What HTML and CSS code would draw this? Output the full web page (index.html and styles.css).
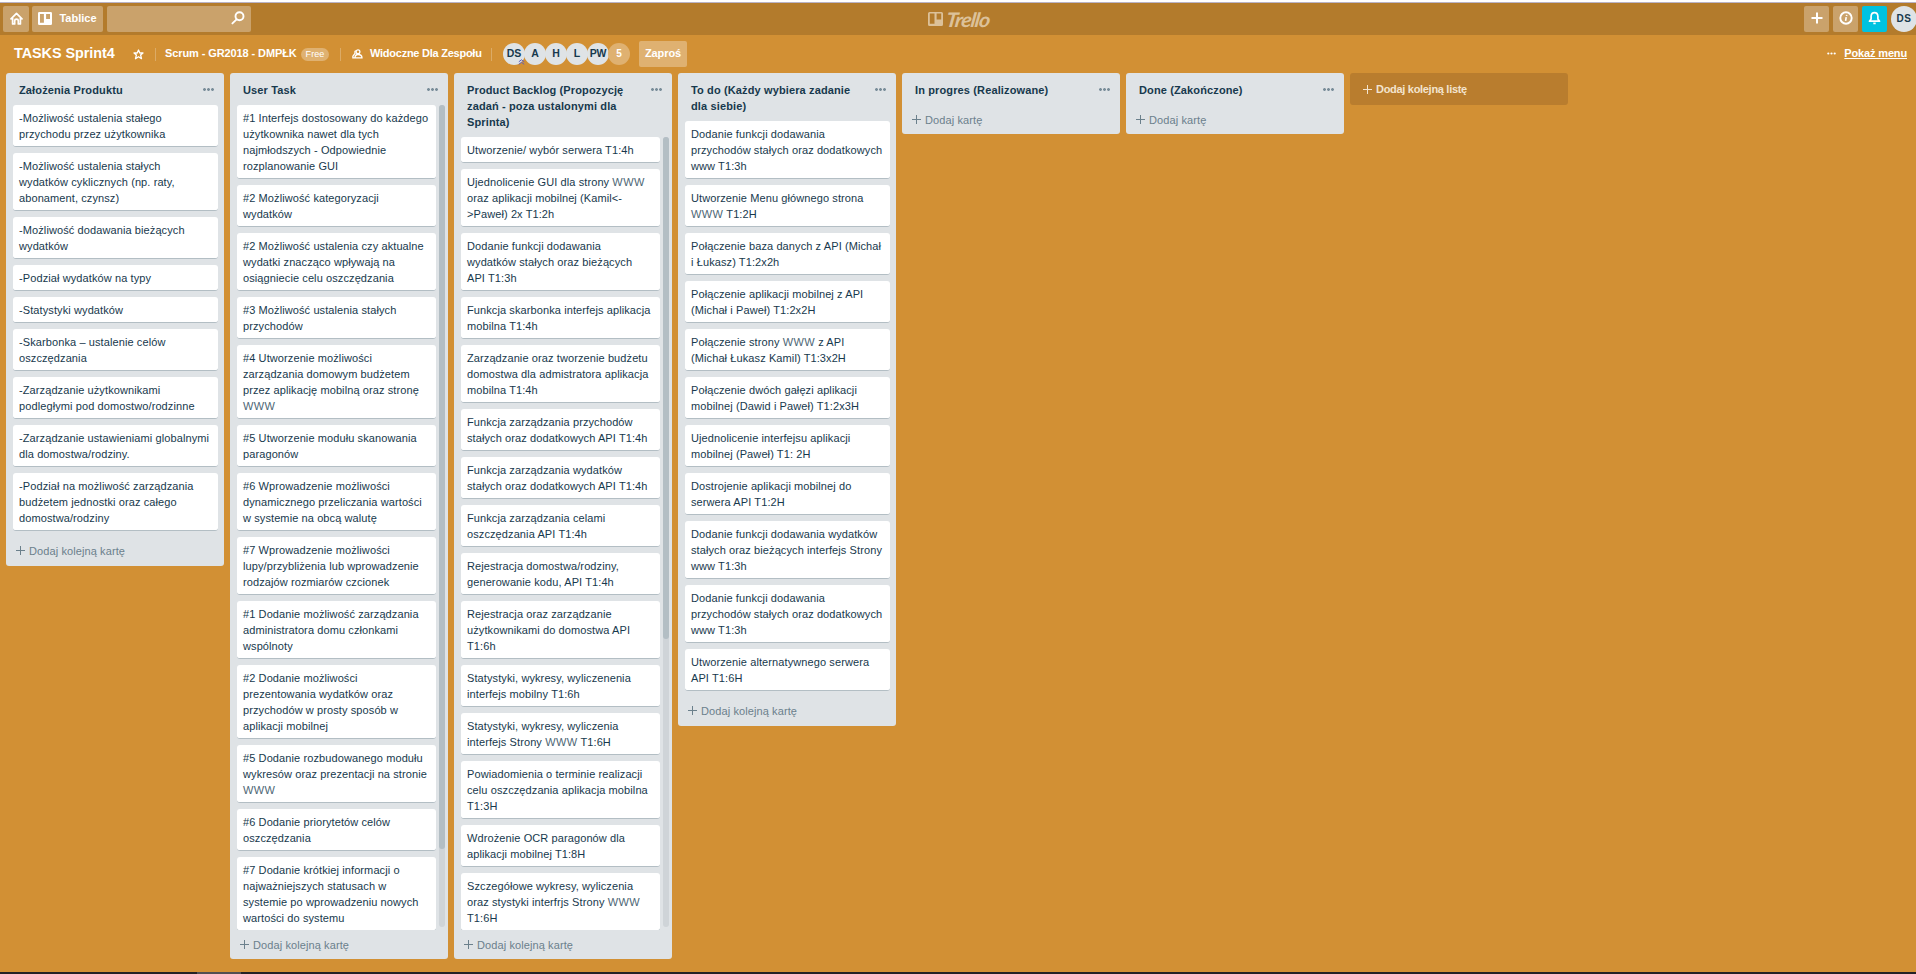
FILE: index.html
```html
<!DOCTYPE html>
<html lang="pl">
<head>
<meta charset="utf-8">
<title>TASKS Sprint4 | Trello</title>
<link rel="stylesheet" href="styles.css">
</head>
<body>
<div class="window-edge"></div>
<header class="topbar">
  <div class="topbar-left">
    <a class="btn btn-home"><svg width="13" height="13" viewBox="0 0 13 13" fill="none" stroke="#fff" stroke-width="1.7" stroke-linejoin="round" stroke-linecap="round"><path d="M1 6.8 6.5 1.4 12 6.8M2.6 6v5.9h2.1V8.4q0-1.3 1.8-1.3t1.8 1.3v3.5h2.1V6"/></svg></a>
    <a class="btn btn-boards"><svg width="14" height="13" viewBox="0 0 14 13"><path fill="#fff" fill-rule="evenodd" d="M1.3 0h11.4Q14 0 14 1.3v10.4Q14 13 12.700 13H1.300Q0 13 0 11.700V1.300Q0 0 1.300 0zM2 2v8.700h3.900V2zM8.100 2v5h3.900V2z"/></svg><span>Tablice</span></a>
    <div class="search"><svg width="14" height="14" viewBox="0 0 14 14" fill="none" stroke="#fff" stroke-width="1.9" stroke-linecap="round"><circle cx="8.500" cy="5.300" r="4"/><path d="M5.600 8.400 1.400 12.400"/></svg></div>
  </div>
  <div class="logo"><svg width="15" height="14" viewBox="0 0 15 14"><path fill="currentColor" fill-rule="evenodd" d="M1.500 0h12Q15 0 15 1.500v11Q15 14 13.500 14h-12Q0 14 0 12.500v-11Q0 0 1.500 0zM1.800 1.500v10.300h4.700V1.500zM8.600 1.500v6h4.600v-6z"/></svg><span>Trello</span></div>
  <div class="topbar-right">
    <a class="btn btn-sq"><svg width="12" height="12" viewBox="0 0 12 12" stroke="#fff" stroke-width="2"><path d="M6 .5v11M.5 6h11"/></svg></a>
    <a class="btn btn-sq"><svg width="14" height="14" viewBox="0 0 14 14" fill="none" stroke="#fff"><circle cx="7" cy="7" r="5.700" stroke-width="1.900"/><path stroke-width="1.600" d="M7.200 6.200 6.600 9.800M7.700 3.900l-.2 1.100"/></svg></a>
    <a class="btn btn-sq btn-bell"><svg width="13" height="14" viewBox="0 0 13 14" fill="none" stroke="#fff" stroke-width="1.700" stroke-linejoin="round"><path d="M1.500 10.200h10L9.900 8V5.200Q9.600 1.700 6.500 1.700T3.100 5.200V8z"/><path d="M5.300 12.400h2.400"/></svg></a>
    <span class="me">DS</span>
  </div>
</header>

<div class="boardbar">
  <h1>TASKS Sprint4</h1>
  <svg class="star" width="11" height="11" viewBox="0 0 11 11" fill="none" stroke="#fff" stroke-width="1.300" stroke-linejoin="round"><path d="M5.500 1 6.800 4h3.200L7.600 6l.9 3.700-3-2-3 2L3.400 6 1 4h3.200z"/></svg>
  <i class="sep sep-a"></i>
  <span class="team">Scrum - GR2018 - DMPŁK</span><span class="free">Free</span>
  <i class="sep sep-b"></i>
  <svg class="team-icon" width="11" height="10" viewBox="0 0 11 10" fill="none" stroke="#fff" stroke-width="1.300"><circle cx="6" cy="2.700" r="1.900"/><path d="M3 8.900c0-2.700 1-3.400 3-3.400s4 .9 4 3.400zM3.700 1.700Q2.500 2.300 3 4.400L.9 7.200V8.900h2"/></svg>
  <span class="visibility">Widoczne Dla Zespołu</span>
  <i class="sep sep-c"></i>
  <div class="members">
    <span class="av">DS<svg class="admin" width="7" height="6" viewBox="0 0 7 6" fill="none" stroke="#5b5fc0"><path d="M.8 2.800 3.500.8l2.700 2M.8 5.300l2.700-2 2.700 2"/></svg></span><span class="av">A</span><span class="av">H</span><span class="av">L</span><span class="av">PW</span><span class="av more">5</span>
  </div>
  <a class="invite">Zaproś</a>
  <div class="menu"><svg width="9" height="3" viewBox="0 0 9 3" fill="#fff"><circle cx="1.300" cy="1.500" r="1.100"/><circle cx="4.500" cy="1.500" r="1.100"/><circle cx="7.700" cy="1.500" r="1.100"/></svg><a>Pokaż menu</a></div>
</div>

<main class="board">
  <section class="list">
    <header><h2>Założenia Produktu</h2><i class="dots"></i></header>
    <div class="cards">
      <p>-Możliwość ustalenia stałego<br>przychodu przez użytkownika</p>
      <p>-Możliwość ustalenia stałych<br>wydatków cyklicznych (np. raty,<br>abonament, czynsz)</p>
      <p>-Możliwość dodawania bieżących<br>wydatków</p>
      <p>-Podział wydatków na typy</p>
      <p>-Statystyki wydatków</p>
      <p>-Skarbonka – ustalenie celów<br>oszczędzania</p>
      <p>-Zarządzanie użytkownikami<br>podległymi pod domostwo/rodzinne</p>
      <p>-Zarządzanie ustawieniami globalnymi<br>dla domostwa/rodziny.</p>
      <p>-Podział na możliwość zarządzania<br>budżetem jednostki oraz całego<br>domostwa/rodziny</p>
    </div>
    <a class="add add-more">Dodaj kolejną kartę</a>
  </section>

  <section class="list tall">
    <header><h2>User Task</h2><i class="dots"></i></header>
    <div class="scroller">
      <div class="cards">
        <p>#1 Interfejs dostosowany do każdego<br>użytkownika nawet dla tych<br>najmłodszych - Odpowiednie<br>rozplanowanie GUI</p>
        <p>#2 Możliwość kategoryzacji<br>wydatków</p>
        <p>#2 Możliwość ustalenia czy aktualne<br>wydatki znacząco wpływają na<br>osiągniecie celu oszczędzania</p>
        <p>#3 Możliwość ustalenia stałych<br>przychodów</p>
        <p>#4 Utworzenie możliwości<br>zarządzania domowym budżetem<br>przez aplikację mobilną oraz stronę<br><b>WWW</b></p>
        <p>#5 Utworzenie modułu skanowania<br>paragonów</p>
        <p>#6 Wprowadzenie możliwości<br>dynamicznego przeliczania wartości<br>w systemie na obcą walutę</p>
        <p>#7 Wprowadzenie możliwości<br>lupy/przybliżenia lub wprowadzenie<br>rodzajów rozmiarów czcionek</p>
        <p>#1 Dodanie możliwość zarządzania<br>administratora domu członkami<br>wspólnoty</p>
        <p>#2 Dodanie możliwości<br>prezentowania wydatków oraz<br>przychodów w prosty sposób w<br>aplikacji mobilnej</p>
        <p>#5 Dodanie rozbudowanego modułu<br>wykresów oraz prezentacji na stronie<br><b>WWW</b></p>
        <p>#6 Dodanie priorytetów celów<br>oszczędzania</p>
        <p>#7 Dodanie krótkiej informacji o<br>najważniejszych statusach w<br>systemie po wprowadzeniu nowych<br>wartości do systemu</p>
      </div>
      <div class="track"><div class="thumb thumb-tasks"></div></div>
    </div>
    <a class="add">Dodaj kolejną kartę</a>
  </section>

  <section class="list tall">
    <header><h2>Product Backlog (Propozycję<br>zadań - poza ustalonymi dla<br>Sprinta)</h2><i class="dots"></i></header>
    <div class="scroller">
      <div class="cards">
        <p>Utworzenie/ wybór serwera T1:4h</p>
        <p>Ujednolicenie GUI dla strony <b>WWW</b><br>oraz aplikacji mobilnej (Kamil&lt;-<br>&gt;Paweł) 2x T1:2h</p>
        <p>Dodanie funkcji dodawania<br>wydatków stałych oraz bieżących<br>API T1:3h</p>
        <p>Funkcja skarbonka interfejs aplikacja<br>mobilna T1:4h</p>
        <p>Zarządzanie oraz tworzenie budżetu<br>domostwa dla admistratora aplikacja<br>mobilna T1:4h</p>
        <p>Funkcja zarządzania przychodów<br>stałych oraz dodatkowych API T1:4h</p>
        <p>Funkcja zarządzania wydatków<br>stałych oraz dodatkowych API T1:4h</p>
        <p>Funkcja zarządzania celami<br>oszczędzania API T1:4h</p>
        <p>Rejestracja domostwa/rodziny,<br>generowanie kodu, API T1:4h</p>
        <p>Rejestracja oraz zarządzanie<br>użytkownikami do domostwa API<br>T1:6h</p>
        <p>Statystyki, wykresy, wyliczenenia<br>interfejs mobilny T1:6h</p>
        <p>Statystyki, wykresy, wyliczenia<br>interfejs Strony <b>WWW</b> T1:6H</p>
        <p>Powiadomienia o terminie realizacji<br>celu oszczędzania aplikacja mobilna<br>T1:3H</p>
        <p>Wdrożenie OCR paragonów dla<br>aplikacji mobilnej T1:8H</p>
        <p>Szczegółowe wykresy, wyliczenia<br>oraz stystyki interfrjs Strony <b>WWW</b><br>T1:6H</p>
      </div>
      <div class="track"><div class="thumb thumb-backlog"></div></div>
    </div>
    <a class="add">Dodaj kolejną kartę</a>
  </section>

  <section class="list">
    <header><h2>To do (Każdy wybiera zadanie<br>dla siebie)</h2><i class="dots"></i></header>
    <div class="cards">
      <p>Dodanie funkcji dodawania<br>przychodów stałych oraz dodatkowych<br>www T1:3h</p>
      <p>Utworzenie Menu głównego strona<br><b>WWW</b> T1:2H</p>
      <p>Połączenie baza danych z API (Michał<br>i Łukasz) T1:2x2h</p>
      <p>Połączenie aplikacji mobilnej z API<br>(Michał i Paweł) T1:2x2H</p>
      <p>Połączenie strony <b>WWW</b> z API<br>(Michał Łukasz Kamil) T1:3x2H</p>
      <p>Połączenie dwóch gałęzi aplikacji<br>mobilnej (Dawid i Paweł) T1:2x3H</p>
      <p>Ujednolicenie interfejsu aplikacji<br>mobilnej (Paweł) T1: 2H</p>
      <p>Dostrojenie aplikacji mobilnej do<br>serwera API T1:2H</p>
      <p>Dodanie funkcji dodawania wydatków<br>stałych oraz bieżących interfejs Strony<br>www T1:3h</p>
      <p>Dodanie funkcji dodawania<br>przychodów stałych oraz dodatkowych<br>www T1:3h</p>
      <p>Utworzenie alternatywnego serwera<br>API T1:6H</p>
    </div>
    <a class="add add-more">Dodaj kolejną kartę</a>
  </section>

  <section class="list">
    <header><h2>In progres (Realizowane)</h2><i class="dots"></i></header>
    <a class="add">Dodaj kartę</a>
  </section>

  <section class="list">
    <header><h2>Done (Zakończone)</h2><i class="dots"></i></header>
    <a class="add">Dodaj kartę</a>
  </section>

  <a class="new-list">Dodaj kolejną listę</a>
</main>
<footer class="taskbar"><i></i></footer>
</body>
</html>
```
FILE: styles.css
```css
* { box-sizing: border-box; }
html, body { height: 100%; }
body {
  margin: 0;
  display: flex;
  flex-direction: column;
  overflow: hidden;
  background: #d29034;
  font: 11px/16px "Liberation Sans", Arial, sans-serif;
  letter-spacing: .1px;
  color: #17394d;
}
svg { display: block; flex: none; }
h1, h2, p { margin: 0; }

.window-edge { height: 3px; flex: none; background: #fff; border-bottom: 1px solid #b9b3c6; }

.topbar {
  flex: none;
  height: 32px;
  display: grid;
  grid-template-columns: 1fr auto 1fr;
  align-items: center;
  padding-left: 3px;
  background: #b37b2c;
}
.topbar-left, .topbar-right { display: flex; align-items: center; }
.topbar-right { justify-content: flex-end; gap: 4px; }
.btn, .search {
  height: 26px;
  display: flex;
  align-items: center;
  justify-content: center;
  padding-bottom: 2px;
  border-radius: 2px;
  background: #caa26b;
}
.btn-home { width: 26px; margin-right: 3px; }
.btn-boards {
  width: 71px;
  margin-right: 4px;
  gap: 7px;
  color: #fff;
  font-weight: bold;
  letter-spacing: 0;
}
.search { width: 144px; justify-content: flex-end; padding-right: 6px; }
.btn-sq { width: 25px; }
.btn-bell { background: #00c2e0; }
.me {
  width: 26px;
  height: 26px;
  margin-right: -1px;
  border-radius: 50%;
  background: #dfe3e6;
  font-weight: bold;
  font-size: 10px;
  line-height: 25px;
  text-align: center;
  letter-spacing: .5px;
}
.logo {
  width: 64px;
  display: flex;
  align-items: center;
  gap: 3px;
  color: #dcc199;
}
.logo span {
  font: italic bold 20px/20px "Lato", sans-serif;
  letter-spacing: -1px;
  transform: skewX(-8deg) scaleX(1.080);
  transform-origin: 0 60%;
}

.boardbar {
  flex: none;
  height: 38px;
  display: flex;
  align-items: center;
  padding: 0 9px 0 14px;
  color: #fff;
  font-weight: bold;
  letter-spacing: -.1px;
  white-space: nowrap;
}
.boardbar h1, .team, .visibility, .menu { padding-bottom: 2px; }
.boardbar h1 { width: 119px; font-size: 14.400px; letter-spacing: -.05px; }
.sep { width: 1px; height: 13px; background: #dcab66; }
.sep-a { margin: 0 9px 0 11px; }
.team { width: 133px; }
.free {
  width: 28px;
  height: 13px;
  margin-left: 3px;
  border-radius: 7px;
  background: #dfb171;
  font: 9px/13px "Liberation Sans", Arial, sans-serif;
  letter-spacing: .1px;
  text-align: center;
}
.sep-b { margin: 0 11px; }
.visibility { width: 112px; margin-left: 7px; letter-spacing: -.25px; }
.sep-c { margin: 0 11px 0 9px; }
.members { display: flex; }
.av {
  position: relative;
  width: 22px;
  height: 22px;
  margin-right: -1px;
  border-radius: 50%;
  background: #dfe3e6;
  color: #17394d;
  font-size: 10.500px;
  line-height: 21px;
  text-align: center;
}
.more { background: #dfb171; color: #fff; font-size: 10px; }
.admin { position: absolute; right: 0; bottom: 0; }
.invite {
  width: 48px;
  height: 26px;
  margin-left: 10px;
  border-radius: 2px;
  background: #dfb171;
  line-height: 25px;
  text-align: center;
}
.menu { margin-left: auto; display: flex; align-items: center; gap: 8px; letter-spacing: -.15px; }
.menu a { text-decoration: underline; }

.board {
  flex: 1;
  min-height: 0;
  display: flex;
  align-items: flex-start;
  gap: 6px;
  padding: 0 6px;
}
.list {
  flex: none;
  width: 218px;
  border-radius: 3px;
  background: #dfe3e6;
  white-space: nowrap;
}
.tall { height: 886px; display: flex; flex-direction: column; }
.list header {
  flex: none;
  display: flex;
  justify-content: space-between;
  align-items: flex-start;
  padding: 9px 10px 7px 13px;
}
.list h2 { font-size: 11px; letter-spacing: .13px; }
.dots {
  width: 11px;
  height: 3px;
  margin-top: 6px;
  background: radial-gradient(circle at 1.500px 1.500px, #798d99 1.200px, transparent 1.600px) 0 0 / 4px 3px repeat-x;
}
.cards { padding: 0 6px 0 7px; }
.cards p {
  margin-bottom: 6px;
  padding: 5px 6px 4px;
  border-radius: 3px;
  border-bottom: 1px solid #b3bec4;
  background: #fff;
}
.cards b { font-weight: normal; letter-spacing: .4px; color: #4d6675; }
.scroller { flex: none; height: 825px; display: flex; overflow: hidden; }
.scroller .cards { flex: none; width: 206px; padding-right: 0; }
.tall:nth-child(3) .scroller { height: 793px; }
.track {
  width: 6px;
  margin: 0 0 3px 3px;
  border-radius: 3px;
  background: #cfd4d8;
}
.thumb { border-radius: 3px; background: #b3bec4; }
.thumb-tasks { height: 744px; }
.thumb-backlog { height: 502px; }
.add {
  height: 29px;
  display: flex;
  align-items: center;
  gap: 4px;
  padding: 0 10px;
  color: #6b808c;
}
.add-more { padding-bottom: 2px; }
.add::before, .new-list::before {
  content: "";
  width: 9px;
  height: 9px;
  background:
    linear-gradient(currentColor, currentColor) 50% / 1px 100% no-repeat,
    linear-gradient(currentColor, currentColor) 50% / 100% 1px no-repeat;
}
.new-list {
  flex: none;
  width: 218px;
  height: 32px;
  display: flex;
  align-items: center;
  gap: 4px;
  padding-left: 13px;
  border-radius: 3px;
  background: #b97d2e;
  color: #f3e4ce;
  font-weight: bold;
  letter-spacing: -.3px;
}
.taskbar { flex: none; height: 2px; padding-left: 197px; background: #232225; }
.taskbar i { display: block; width: 44px; height: 2px; background: #514f52; }
```
